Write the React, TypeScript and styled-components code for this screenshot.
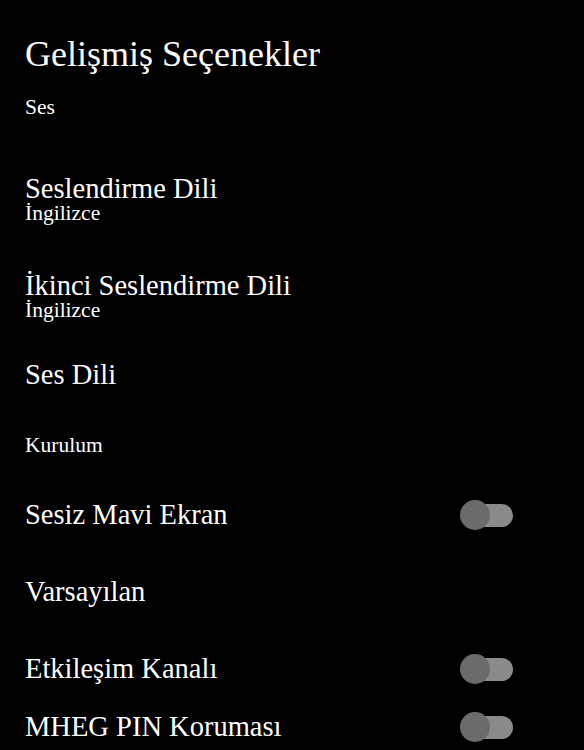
import React from "react";
import styled, { createGlobalStyle } from "styled-components";

const Global = createGlobalStyle`
  html, body {
    margin: 0;
    padding: 0;
    background: #000;
  }
  body {
    color: #fff;
    font-family: "Liberation Serif", "Times New Roman", serif;
  }
`;

const Page = styled.div`
  min-height: 750px;
  box-sizing: border-box;
  padding: 34px 71px 0 25px;
  background: #000;
  color: #fff;
  display: flex;
  flex-direction: column;
`;

const Title = styled.h1`
  margin: 0;
  font-size: 36px;
  line-height: 40px;
  font-weight: 400;
`;

const SectionHeader = styled.div<{ $gap: number }>`
  margin-top: ${(p) => p.$gap}px;
  font-size: 21.5px;
  line-height: 24px;
`;

const Row = styled.div<{ $gap: number }>`
  margin-top: ${(p) => p.$gap}px;
  display: flex;
  align-items: center;
  justify-content: space-between;
  min-height: 28px;
`;

const TextBlock = styled.div`
  display: flex;
  flex-direction: column;
`;

const Label = styled.div`
  font-size: 28.5px;
  line-height: 28px;
`;

const SubValue = styled.div`
  font-size: 21.5px;
  line-height: 20px;
`;

const Switch = styled.div`
  position: relative;
  width: 53px;
  height: 30px;
  flex-shrink: 0;
`;

const Track = styled.div`
  position: absolute;
  right: 0;
  top: 4px;
  width: 50px;
  height: 23px;
  border-radius: 12px;
  background: #8a8a8a;
`;

const Knob = styled.div`
  position: absolute;
  left: 0;
  top: 0;
  width: 30px;
  height: 30px;
  border-radius: 50%;
  background: #6b6b6b;
`;

const Toggle = () => (
  <Switch>
    <Track />
    <Knob />
  </Switch>
);

type Item =
  | { kind: "header"; text: string; gap: number }
  | { kind: "row"; label: string; sub?: string; toggle?: boolean; gap: number };

const items: Item[] = [
  { kind: "header", text: "Ses", gap: 21 },
  { kind: "row", label: "Seslendirme Dili", sub: "İngilizce", gap: 56 },
  { kind: "row", label: "İkinci Seslendirme Dili", sub: "İngilizce", gap: 49 },
  { kind: "row", label: "Ses Dili", gap: 41 },
  { kind: "header", text: "Kurulum", gap: 44 },
  { kind: "row", label: "Sesiz Mavi Ekran", toggle: true, gap: 43 },
  { kind: "row", label: "Varsayılan", gap: 48 },
  { kind: "row", label: "Etkileşim Kanalı", toggle: true, gap: 48 },
  { kind: "row", label: "MHEG PIN Koruması", toggle: true, gap: 28 },
];

export default function App() {
  return (
    <>
      <Global />
      <Page>
        <Title>Gelişmiş Seçenekler</Title>
        {items.map((it, i) =>
          it.kind === "header" ? (
            <SectionHeader key={i} $gap={it.gap}>
              {it.text}
            </SectionHeader>
          ) : (
            <Row key={i} $gap={it.gap}>
              <TextBlock>
                <Label>{it.label}</Label>
                {it.sub && <SubValue>{it.sub}</SubValue>}
              </TextBlock>
              {it.toggle && <Toggle />}
            </Row>
          )
        )}
      </Page>
    </>
  );
}
